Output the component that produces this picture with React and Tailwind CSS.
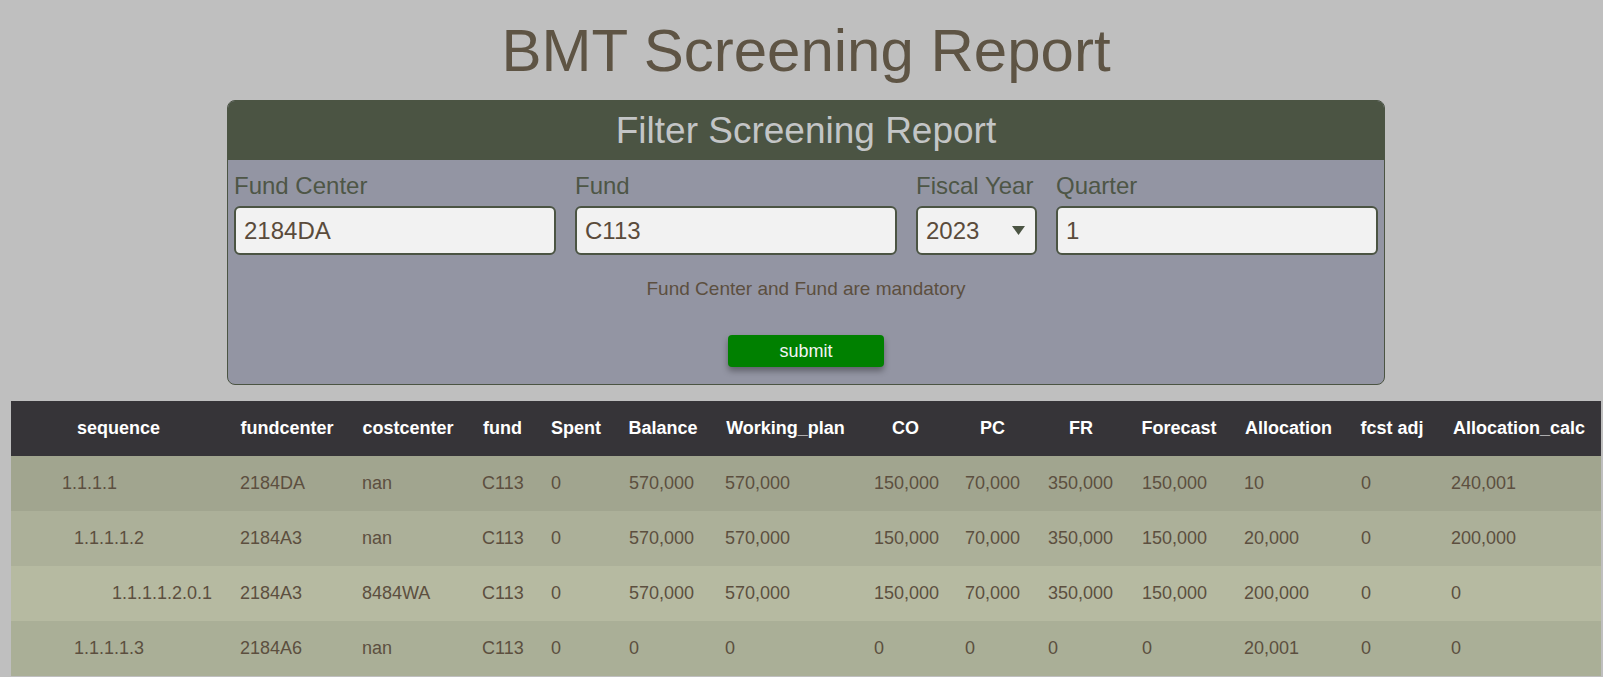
import { useState } from 'react'

const columns = [
  { key: 'sequence', label: 'sequence', w: 'w-[215px]' },
  { key: 'fundcenter', label: 'fundcenter', w: 'w-[122px]' },
  { key: 'costcenter', label: 'costcenter', w: 'w-[120px]' },
  { key: 'fund', label: 'fund', w: 'w-[69px]' },
  { key: 'spent', label: 'Spent', w: 'w-[78px]' },
  { key: 'balance', label: 'Balance', w: 'w-[96px]' },
  { key: 'working', label: 'Working_plan', w: 'w-[149px]' },
  { key: 'co', label: 'CO', w: 'w-[91px]' },
  { key: 'pc', label: 'PC', w: 'w-[83px]' },
  { key: 'fr', label: 'FR', w: 'w-[94px]' },
  { key: 'forecast', label: 'Forecast', w: 'w-[102px]' },
  { key: 'allocation', label: 'Allocation', w: 'w-[117px]' },
  { key: 'fcstadj', label: 'fcst adj', w: 'w-[90px]' },
  { key: 'alloccalc', label: 'Allocation_calc', w: 'w-[164px]' },
]

const rows = [
  {
    indent: 'pl-[51px]', bg: 'bg-[#a1a58f]',
    sequence: '1.1.1.1', fundcenter: '2184DA', costcenter: 'nan', fund: 'C113', spent: '0',
    balance: '570,000', working: '570,000', co: '150,000', pc: '70,000', fr: '350,000',
    forecast: '150,000', allocation: '10', fcstadj: '0', alloccalc: '240,001',
  },
  {
    indent: 'pl-[63px]', bg: 'bg-[#acb099]',
    sequence: '1.1.1.1.2', fundcenter: '2184A3', costcenter: 'nan', fund: 'C113', spent: '0',
    balance: '570,000', working: '570,000', co: '150,000', pc: '70,000', fr: '350,000',
    forecast: '150,000', allocation: '20,000', fcstadj: '0', alloccalc: '200,000',
  },
  {
    indent: 'pl-[101px]', bg: 'bg-[#b6baa1]',
    sequence: '1.1.1.1.2.0.1', fundcenter: '2184A3', costcenter: '8484WA', fund: 'C113', spent: '0',
    balance: '570,000', working: '570,000', co: '150,000', pc: '70,000', fr: '350,000',
    forecast: '150,000', allocation: '200,000', fcstadj: '0', alloccalc: '0',
  },
  {
    indent: 'pl-[63px]', bg: 'bg-[#aaaf97]',
    sequence: '1.1.1.1.3', fundcenter: '2184A6', costcenter: 'nan', fund: 'C113', spent: '0',
    balance: '0', working: '0', co: '0', pc: '0', fr: '0',
    forecast: '0', allocation: '20,001', fcstadj: '0', alloccalc: '0',
  },
]

const inputCls =
  'w-full h-[49px] px-[8px] rounded-[6px] border-2 border-[#4b5443] bg-[#f2f2f2] text-[24px] text-[#5a4b3b] outline-none'

export default function App() {
  const [fundCenter, setFundCenter] = useState('2184DA')
  const [fund, setFund] = useState('C113')
  const [year, setYear] = useState('2023')
  const [quarter, setQuarter] = useState('1')

  return (
    <div className="min-h-[677px] bg-[#bfbfbf] pt-[17px] font-['Liberation_Sans',Arial,sans-serif]">
      <div className="ml-[227px] w-[1158px]">
        {/* Title */}
        <h1 className="text-center text-[60px] leading-[67px] text-[#5e5444] mb-[16px]">BMT Screening Report</h1>

        {/* Filter panel */}
        <div className="h-[285px] rounded-[8px] border border-[#4b5443] bg-[#9395a3] overflow-hidden">
          <div className="h-[59px] bg-[#4b5443] flex items-center justify-center">
            <h2 className="text-[37px] leading-none text-[#c3c5c6]">Filter Screening Report</h2>
          </div>
          <div className="px-[6px] pt-[12px]">
            <div className="grid grid-cols-[322px_322px_121px_322px] gap-x-[19px]">
              <div>
                <label className="block text-[24px] leading-[28px] text-[#4e5646] mb-[6px] whitespace-nowrap">Fund Center</label>
                <input className={inputCls} value={fundCenter} onChange={e => setFundCenter(e.target.value)} />
              </div>
              <div>
                <label className="block text-[24px] leading-[28px] text-[#4e5646] mb-[6px] whitespace-nowrap">Fund</label>
                <input className={inputCls} value={fund} onChange={e => setFund(e.target.value)} />
              </div>
              <div>
                <label className="block text-[24px] leading-[28px] text-[#4e5646] mb-[6px] whitespace-nowrap">Fiscal Year</label>
                <div className="relative">
                  <select
                    className={`${inputCls} appearance-none pr-[30px]`}
                    value={year}
                    onChange={e => setYear(e.target.value)}
                  >
                    <option>2022</option>
                    <option>2023</option>
                    <option>2024</option>
                  </select>
                  <svg className="absolute right-[12px] top-[20px] pointer-events-none" width="13" height="9" viewBox="0 0 13 9">
                    <path d="M0 0 H13 L6.5 9 Z" fill="#4b5443" />
                  </svg>
                </div>
              </div>
              <div>
                <label className="block text-[24px] leading-[28px] text-[#4e5646] mb-[6px] whitespace-nowrap">Quarter</label>
                <input className={inputCls} value={quarter} onChange={e => setQuarter(e.target.value)} />
              </div>
            </div>

            <p className="mt-[23px] text-center text-[19px] leading-[22px] text-[#5c4f3f]">Fund Center and Fund are mandatory</p>

            <div className="mt-[35px] flex justify-center">
              <button className="w-[156px] h-[32px] rounded-[4px] bg-[#008000] text-[18px] text-[#f4f4f4] shadow-[0_4px_6px_rgba(0,0,0,0.35)]">
                submit
              </button>
            </div>
          </div>
        </div>
      </div>

      {/* Report table */}
      <table className="mt-[16px] ml-[11px] w-[1590px] table-fixed border-collapse text-[18px]">
        <colgroup>
          {columns.map(c => (
            <col key={c.key} className={c.w} />
          ))}
        </colgroup>
        <thead>
          <tr className="bg-[#363438]">
            {columns.map(c => (
              <th key={c.key} className="h-[55px] px-[6px] text-center font-bold text-white whitespace-nowrap">
                {c.label}
              </th>
            ))}
          </tr>
        </thead>
        <tbody>
          {rows.map((r, i) => (
            <tr key={i} className={r.bg}>
              {columns.map(c => (
                <td
                  key={c.key}
                  className={`h-[55px] text-left text-[#5c4f3f] whitespace-nowrap ${c.key === 'sequence' ? r.indent : 'pl-[14px]'}`}
                >
                  {r[c.key]}
                </td>
              ))}
            </tr>
          ))}
        </tbody>
      </table>
    </div>
  )
}
